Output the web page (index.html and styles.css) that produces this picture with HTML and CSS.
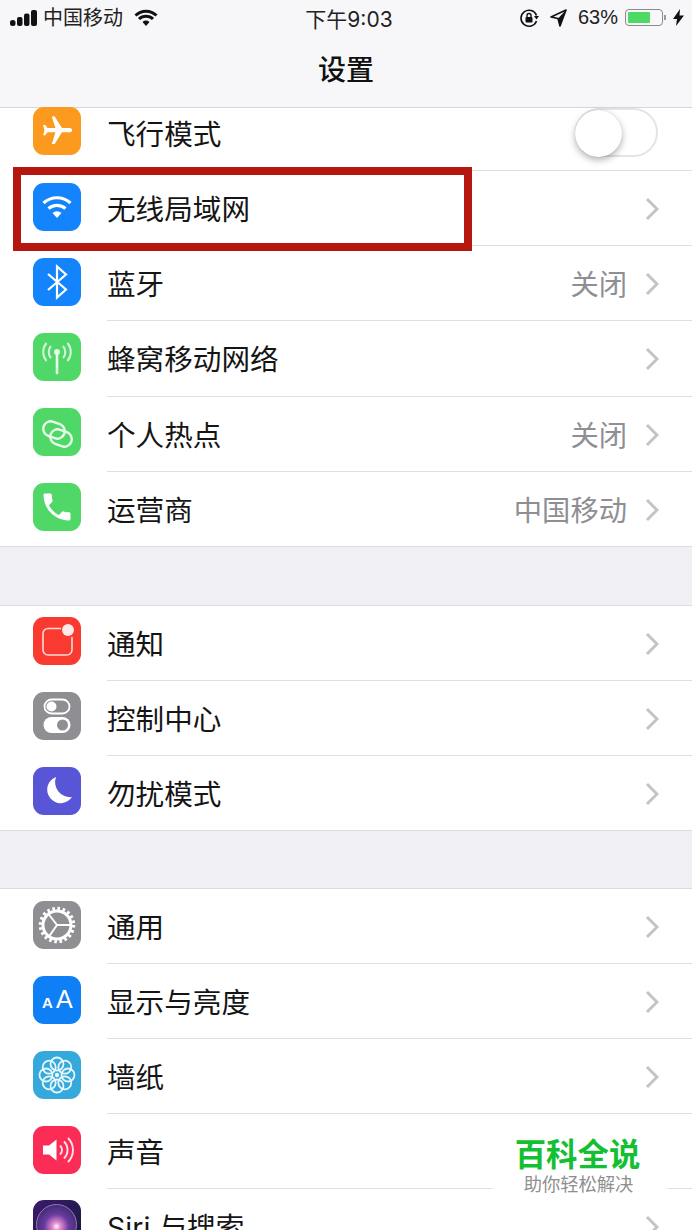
FILE: index.html
```html
<!DOCTYPE html>
<html lang="zh-CN">
<head>
  <meta charset="UTF-8" />
  <title>设置</title>
  <meta name="viewport" content="width=device-width, initial-scale=1" />
  <link rel="stylesheet" href="styles.css">
</head>
<body>
  <svg class="defs" width="0" height="0">
    <symbol id="chevron" viewBox="0 0 14 24"><path d="M2 2l10 10L2 22" fill="none" stroke="#c4c4c8" stroke-width="3"/></symbol>
  </svg>

  <header class="topbar">
    <div class="status">
      <div class="status-left">
        <svg class="signal" width="27" height="16" viewBox="0 0 27 16"><rect x="0" y="10" width="5.500" height="6" rx="2.500"/><rect x="7" y="7" width="5.500" height="9" rx="2"/><rect x="14" y="3.500" width="5.500" height="12.500" rx="2"/><rect x="21" y="0" width="6" height="16" rx="2"/></svg>
        <span class="carrier">中国移动</span>
        <svg class="status-wifi" width="24" height="18" viewBox="0 0 24 18"><path d="M1.500 6.500a15 15 0 0 1 21 0M5 10a10 10 0 0 1 14 0" fill="none" stroke="#111" stroke-width="3"/><path d="M8.500 13a5 5 0 0 1 7 0L12 17z" fill="#111"/></svg>
      </div>
      <div class="clock">下午9:03</div>
      <div class="status-right">
        <svg width="20" height="20" viewBox="0 0 20 20"><path d="M17.500 7.500A8 8 0 1 0 17.500 13" fill="none" stroke="#111" stroke-width="1.600"/><path d="M15 8h5l-2.500 3.500z" fill="#111"/><rect x="6.500" y="9" width="7" height="5.500" rx="1" fill="#111"/><path d="M8 9V7.500a2 2 0 0 1 4 0V9" fill="none" stroke="#111" stroke-width="1.400"/></svg>
        <svg class="loc" width="17" height="18" viewBox="0 0 17 18"><path d="M16 1L1 8l7 1.500L10 17z" fill="none" stroke="#111" stroke-width="1.600" stroke-linejoin="round"/><path d="M16 1L8 9.500 10 17z" fill="#111"/></svg>
        <span class="percent">63%</span>
        <div class="battery"><div class="battery-fill"></div></div>
        <span class="battery-tip"></span>
        <svg class="bolt" width="11" height="17" viewBox="0 0 11 17"><path d="M7 0L0 10h4l-1 7 8-10.500H6.500z" fill="#111"/></svg>
      </div>
    </div>
    <h1 class="title">设置</h1>
  </header>

  <main>
    <ul class="group group-first">
      <li class="row row-clipped">
        <span class="app-icon orange">
          <svg viewBox="0 0 48 48"><g transform="translate(42 6.500) rotate(90) scale(1.450)"><path fill="#fff" d="M21 16v-2l-8-5V3.500c0-.83-.67-1.500-1.500-1.500S10 2.670 10 3.500V9l-8 5v2l8-2.500V19l-2 1.500V22l3.500-1 3.500 1v-1.500L13 19v-5.500l8 2.500z"/></g></svg>
        </span>
        <div class="row-body">
          <span class="row-title">飞行模式</span>
          <div class="switch"><div class="switch-knob"></div></div>
        </div>
      </li>
      <li class="row">
        <span class="app-icon blue">
          <svg viewBox="0 0 48 48"><path d="M10.500 20a20 20 0 0 1 27 0M15.500 25.500a13 13 0 0 1 17 0" fill="none" stroke="#fff" stroke-width="3.200"/><path d="M19.500 30a7 7 0 0 1 9 0L24 35z" fill="#fff"/></svg>
        </span>
        <div class="row-body">
          <span class="row-title">无线局域网</span>
          <svg class="chevron"><use href="#chevron"/></svg>
        </div>
      </li>
      <li class="row">
        <span class="app-icon blue">
          <svg viewBox="0 0 48 48"><path d="M15 16l18 15.500L24 39.500V8.500l9 8L15 32" fill="none" stroke="#fff" stroke-width="2.200"/></svg>
        </span>
        <div class="row-body">
          <span class="row-title">蓝牙</span>
          <span class="row-value">关闭</span>
          <svg class="chevron"><use href="#chevron"/></svg>
        </div>
      </li>
      <li class="row">
        <span class="app-icon green">
          <svg viewBox="0 0 48 48"><path d="M24 20v20" stroke="#e6f9ea" stroke-width="2.600" fill="none" stroke-linecap="round"/><circle cx="24" cy="19" r="3" fill="#e6f9ea"/><path d="M18 13a9 9 0 0 0 0 12M30 13a9 9 0 0 1 0 12M13.500 10a14 14 0 0 0 0 18M34.500 10a14 14 0 0 1 0 18" fill="none" stroke="#d6f5dc" stroke-width="2"/></svg>
        </span>
        <div class="row-body">
          <span class="row-title">蜂窝移动网络</span>
          <svg class="chevron"><use href="#chevron"/></svg>
        </div>
      </li>
      <li class="row">
        <span class="app-icon green">
          <svg viewBox="0 0 48 48"><g fill="none" stroke="#e6f9ea" stroke-width="2.400"><rect x="10" y="14.500" width="22" height="15" rx="7.500" transform="rotate(20 21 22)"/><rect x="17" y="22.500" width="22" height="15" rx="7.500" transform="rotate(20 28 30)"/></g></svg>
        </span>
        <div class="row-body">
          <span class="row-title">个人热点</span>
          <span class="row-value">关闭</span>
          <svg class="chevron"><use href="#chevron"/></svg>
        </div>
      </li>
      <li class="row">
        <span class="app-icon green">
          <svg viewBox="0 0 48 48"><g transform="translate(6 6) scale(1.500)"><path fill="#fff" d="M6.620 10.790c1.440 2.830 3.760 5.140 6.590 6.590l2.200-2.200c.27-.27.670-.36 1.020-.24 1.120.37 2.330.57 3.570.57.550 0 1 .45 1 1V20c0 .55-.45 1-1 1C10.610 21 3 13.390 3 4c0-.55.45-1 1-1h3.500c.55 0 1 .45 1 1 0 1.250.2 2.450.57 3.570.11.350.03.740-.25 1.020l-2.200 2.200z"/></g></svg>
        </span>
        <div class="row-body">
          <span class="row-title">运营商</span>
          <span class="row-value">中国移动</span>
          <svg class="chevron"><use href="#chevron"/></svg>
        </div>
      </li>
    </ul>

    <ul class="group">
      <li class="row">
        <span class="app-icon red">
          <svg viewBox="0 0 48 48"><path d="M28 11.500H15a5 5 0 0 0-5 5v16.500a5 5 0 0 0 5 5h19a5 5 0 0 0 5-5V20" fill="none" stroke="#ffd9d6" stroke-width="1.600"/><circle cx="35" cy="13" r="6" fill="#ffe9e7"/></svg>
        </span>
        <div class="row-body">
          <span class="row-title">通知</span>
          <svg class="chevron"><use href="#chevron"/></svg>
        </div>
      </li>
      <li class="row">
        <span class="app-icon gray">
          <svg viewBox="0 0 48 48"><rect x="11.500" y="7.500" width="25" height="14" rx="7" fill="none" stroke="#fff" stroke-width="1.800"/><circle cx="18.500" cy="14.500" r="5" fill="#fff"/><rect x="10.500" y="25" width="27" height="16" rx="8" fill="#fff"/><circle cx="29.500" cy="33" r="5.500" fill="#8e8e93"/></svg>
        </span>
        <div class="row-body">
          <span class="row-title">控制中心</span>
          <svg class="chevron"><use href="#chevron"/></svg>
        </div>
      </li>
      <li class="row">
        <span class="app-icon purple">
          <svg viewBox="0 0 48 48"><path d="M23 10A13.500 13.500 0 1 0 39 30A15 15 0 0 1 23 10z" fill="#fff"/></svg>
        </span>
        <div class="row-body">
          <span class="row-title">勿扰模式</span>
          <svg class="chevron"><use href="#chevron"/></svg>
        </div>
      </li>
    </ul>

    <ul class="group group-last">
      <li class="row">
        <span class="app-icon gray">
          <svg viewBox="0 0 48 48"><g fill="none" stroke="#fff"><circle cx="24" cy="24" r="16.500" stroke-width="3.500" stroke-dasharray="2.600 2.580"/><circle cx="24" cy="24" r="14" stroke-width="3"/><path d="M24 24L15.500 13M24 24H38M24 24L16 35.500" stroke-width="2"/></g></svg>
        </span>
        <div class="row-body">
          <span class="row-title">通用</span>
          <svg class="chevron"><use href="#chevron"/></svg>
        </div>
      </li>
      <li class="row">
        <span class="app-icon blue-deep">
          <span class="aa-small">A</span><span class="aa-large">A</span>
        </span>
        <div class="row-body">
          <span class="row-title">显示与亮度</span>
          <svg class="chevron"><use href="#chevron"/></svg>
        </div>
      </li>
      <li class="row">
        <span class="app-icon sky">
          <svg viewBox="0 0 48 48"><g fill="none" stroke="#e8f7fc" stroke-width="1.800"><circle cx="24" cy="13" r="6.500"/><circle cx="31.800" cy="16.200" r="6.500"/><circle cx="35" cy="24" r="6.500"/><circle cx="31.800" cy="31.800" r="6.500"/><circle cx="24" cy="35" r="6.500"/><circle cx="16.200" cy="31.800" r="6.500"/><circle cx="13" cy="24" r="6.500"/><circle cx="16.200" cy="16.200" r="6.500"/></g><circle cx="24" cy="24" r="2.200" fill="#e8f7fc"/></svg>
        </span>
        <div class="row-body">
          <span class="row-title">墙纸</span>
          <svg class="chevron"><use href="#chevron"/></svg>
        </div>
      </li>
      <li class="row">
        <span class="app-icon pink">
          <svg viewBox="0 0 48 48"><path d="M10 19.500h6l7.500-6v21l-7.500-6h-6z" fill="#fff"/><path d="M27 19.500a6 6 0 0 1 0 9M31 15.500a12 12 0 0 1 0 17M35 12a17 17 0 0 1 0 24" fill="none" stroke="#ffe3e9" stroke-width="1.900"/></svg>
        </span>
        <div class="row-body">
          <span class="row-title">声音</span>
          <svg class="chevron"><use href="#chevron"/></svg>
        </div>
      </li>
      <li class="row">
        <span class="app-icon siri"><span class="siri-orb"></span></span>
        <div class="row-body">
          <span class="row-title">Siri 与搜索</span>
          <svg class="chevron"><use href="#chevron"/></svg>
        </div>
      </li>
    </ul>
  </main>

  <!-- annotation + watermark sit on top of the list -->
  <div class="highlight"></div>
  <div class="watermark">
    <div class="watermark-name">百科全说</div>
    <div class="watermark-tag">助你轻松解决</div>
  </div>
</body>
</html>
```

FILE: styles.css
```css
/* Reset and base */
*, *::before, *::after {
  box-sizing: border-box;
}

html, body {
  height: 1230px;
  overflow: hidden;
}

body {
  position: relative;
  margin: 0;
  background-color: #efeff4;
  color: #151515;
  font-family: 'Inter', 'Noto Sans CJK SC', sans-serif;
}

.defs {
  display: block;
  height: 0;
}

/* Top bar */
.topbar {
  height: 108px;
  background-color: #f7f7f9;
  border-bottom: 1px solid #d6d6d9;
}

.status {
  display: grid;
  grid-template-columns: 1fr auto 1fr;
  align-items: center;
  height: 35px;
  padding: 0 8px 0 10px;
  font-size: 20px;
  color: #222;
}

.status-left,
.status-right {
  display: flex;
  align-items: center;
}

.status-right {
  justify-content: flex-end;
}

.signal {
  fill: #111;
}

.carrier {
  margin-left: 6px;
  font-size: 20px;
  line-height: 1;
}

.status-wifi {
  margin-left: 11px;
}

.clock {
  padding-left: 4px;
  font-size: 21px;
}

.loc {
  margin-left: 11px;
}

.percent {
  margin-left: 11px;
  font-family: 'Liberation Sans', sans-serif;
  font-size: 20px;
}

.battery {
  width: 38px;
  height: 17px;
  margin-left: 7px;
  padding: 2px;
  border: 1px solid #8a8a8a;
  border-radius: 4px;
}

.battery-fill {
  width: 22px;
  height: 100%;
  border-radius: 1px;
  background-color: #4cd964;
}

.battery-tip {
  width: 2px;
  height: 5px;
  margin-left: 1px;
  background-color: #999;
}

.bolt {
  margin-left: 7px;
}

.title {
  margin: 0;
  height: 72px;
  padding-top: 15px;
  text-align: center;
  font-size: 28px;
  line-height: 40px;
  font-weight: 500;
  color: #111;
}

/* Settings groups */
.group {
  margin: 58px 0 0;
  padding: 0;
  list-style: none;
  background-color: #fff;
  border-top: 1px solid #dcdce0;
  border-bottom: 1px solid #dcdce0;
}

.group-first {
  margin-top: 0;
  border-top: 0;
}

.group-last {
  margin-top: 57px;
}

.row {
  display: flex;
  align-items: center;
  height: 75px;
  padding-left: 33px;
}

.group-first .row {
  height: 75.2px;
}

.group .row:last-child {
  height: 74.2px;
}

.group .row-clipped {
  height: 63px;
  align-items: flex-start;
}

.row-clipped .app-icon {
  margin: -1px 0 0;
}

.row-body {
  flex-grow: 1;
  align-self: stretch;
  display: flex;
  align-items: center;
  margin-left: 26px;
  padding: 4px 33px 0 0;
  border-bottom: 1px solid #dfdfe2;
}

.row-clipped .row-body {
  padding: 0 33px 9px 0;
}

.row:last-child .row-body {
  border-bottom: 0;
}

.row-title {
  flex-grow: 1;
  font-size: 28.6px;
  line-height: 40px;
  white-space: nowrap;
}

.row-value {
  margin-right: 18px;
  font-size: 28.3px;
  line-height: 40px;
  color: #8e8e93;
}

.chevron {
  width: 14px;
  height: 24px;
  margin-top: -2px;
}

/* App icons */
.app-icon {
  flex: none;
  display: block;
  position: relative;
  width: 48px;
  height: 48px;
  margin-bottom: 4px;
  border-radius: 11px;
  overflow: hidden;
}

.app-icon svg {
  display: block;
  width: 100%;
  height: 100%;
}

.orange { background-color: #fb9a1e; }
.blue { background-color: #1384fb; }
.blue-deep { background-color: #0f7ff5; }
.green { background-color: #4fd868; }
.red { background-color: #f93a31; }
.gray { background-color: #8e8e93; }
.purple { background-color: #5856d6; }
.sky { background-color: #35a9dc; }
.pink { background-color: #fb2d56; }

.aa-small,
.aa-large {
  position: absolute;
  color: #fff;
  font-family: 'Liberation Sans', sans-serif;
}

.aa-small {
  left: 9px;
  top: 17px;
  font-size: 15px;
  line-height: 20px;
  font-weight: 700;
}

.aa-large {
  left: 23px;
  top: 7px;
  font-size: 25px;
  line-height: 32px;
}

.siri {
  background: linear-gradient(135deg, #3a1a6e, #141b38);
}

.siri-orb {
  position: absolute;
  left: 3px;
  top: 4px;
  width: 41px;
  height: 41px;
  border-radius: 50%;
  border: 1.500px solid #a274b8;
  background: radial-gradient(circle at 50% 55%, #fff 0, #e58ad0 14%, #6a3aa0 42%, #1c2450 100%);
}

/* Toggle in the first row */
.switch {
  position: relative;
  flex: none;
  width: 83px;
  height: 49px;
  margin: 0 1px 4px 0;
  border: 2px solid #e4e4e7;
  border-radius: 25px;
  background-color: #fff;
}

.switch-knob {
  position: absolute;
  left: -2px;
  top: 0;
  width: 47px;
  height: 47px;
  border-radius: 50%;
  background-color: #fff;
  box-shadow: 0 3px 7px rgba(0,0,0,0.3), 0 0 1px rgba(0,0,0,0.2);
}

/* Red annotation box */
.highlight {
  position: absolute;
  left: 13px;
  top: 167px;
  width: 459px;
  height: 84px;
  border: 8px solid #b5170e;
}

/* Watermark */
.watermark {
  position: absolute;
  left: 493px;
  top: 1128px;
  width: 174px;
  height: 78px;
  padding: 8px 3px 0 0;
  text-align: center;
  background-color: #fff;
  box-shadow: 0 0 4px #fff;
}

.watermark-name {
  padding-right: 2px;
  font-size: 31.4px;
  line-height: 38px;
  font-weight: 700;
  color: #12c032;
}

.watermark-tag {
  font-size: 18.3px;
  line-height: 21px;
  color: #8f8f8f;
}
```
